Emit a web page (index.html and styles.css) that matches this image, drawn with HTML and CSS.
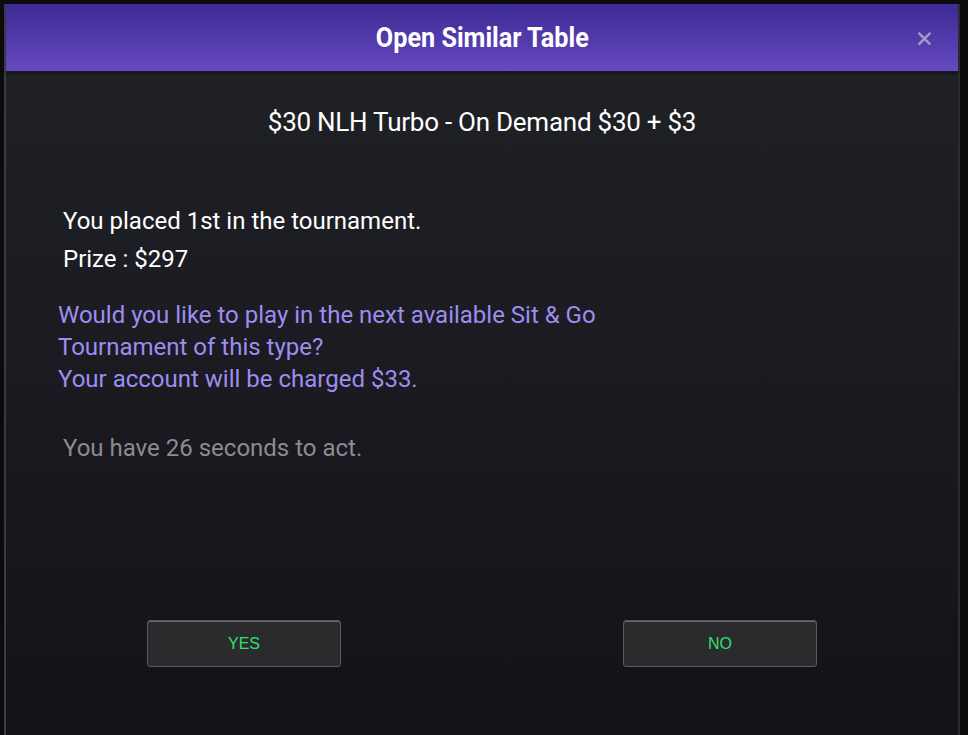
FILE: index.html
```
<!DOCTYPE html>
<html lang="en">
<head>
    <meta charset="UTF-8">
    <meta name="viewport" content="width=device-width, initial-scale=1.0">
    <title>Open Similar Table</title>
    <link rel="stylesheet" href="styles.css">
</head>
<body>

<div class="dialog">
    <!-- Header bar -->
    <div class="dialog-header">
        <h1>Open Similar Table</h1>
        <span class="close-button">&#x2715;</span>
    </div>

    <div class="dialog-body">
        <h2 class="table-name">$30 NLH Turbo - On Demand $30 + $3</h2>

        <div class="result">
            <p>You placed 1st in the tournament.</p>
            <p>Prize : $297</p>
        </div>

        <div class="question">
            <p>Would you like to play in the next available Sit &amp; Go</p>
            <p>Tournament of this type?</p>
            <p>Your account will be charged $33.</p>
        </div>

        <div class="timer">You have 26 seconds to act.</div>

        <div class="buttons">
            <button class="dialog-button">YES</button>
            <button class="dialog-button">NO</button>
        </div>
    </div>
</div>

</body>
</html>
```

FILE: styles.css
```
body {
    margin: 0;
    padding: 0;
    background-color: #0b0b0d;
    font-family: Roboto, "Noto Sans", sans-serif;
    height: 735px;
    overflow: hidden;
}
.dialog {
    margin: 4px 8px 0 4px;
    height: 731px;
    display: flex;
    flex-direction: column;
    border-left: 2px solid #3a3a40;
    border-right: 2px solid #2a2a30;
}
.dialog-header {
    height: 67px;
    background: linear-gradient(to bottom, #3e2a93, #6549c0);
    display: flex;
    align-items: center;
    justify-content: center;
    position: relative;
    border-bottom: 4px solid #17181b;
}
.dialog-header h1 {
    margin: 0;
    color: #fff;
    font-size: 28px;
    font-weight: 700;
    transform: scaleX(0.9);
}
.close-button {
    position: absolute;
    right: 24px;
    top: 22px;
    color: #a3a0bd;
    font-size: 23px;
    font-family: "DejaVu Sans", sans-serif;
}
.dialog-body {
    flex: 1;
    background: linear-gradient(to bottom, #1f2125 0%, #1b1b21 40%, #131219 100%);
    padding: 0 0 0 52px;
}
.dialog-body p {
    margin: 0;
}
.table-name {
    margin: 32px 0 0 -52px;
    text-align: center;
    color: #fff;
    font-size: 26px;
    font-weight: 400;
    letter-spacing: -0.25px;
}
.result {
    margin-top: 65px;
    padding-left: 5px;
    color: #fff;
    font-size: 24px;
    line-height: 38px;
}
.question {
    margin-top: 21px;
    color: #9b8ef0;
    font-size: 24px;
    line-height: 32px;
}
.timer {
    margin-top: 39px;
    padding-left: 5px;
    color: #8c8c8e;
    font-size: 24px;
}
.buttons {
    display: flex;
    justify-content: space-between;
    margin: 158px 0 0 89px;
    width: 670px;
}
.dialog-button {
    width: 194px;
    height: 47px;
    background-color: #2b2b2d;
    border: 1px solid #5a5a5e;
    border-radius: 3px;
    color: #2fe070;
    font-family: "Liberation Sans", Arial, sans-serif;
    font-size: 16px;
    cursor: pointer;
    box-shadow: inset 0 1px 0 #6a6a6e;
}
```
